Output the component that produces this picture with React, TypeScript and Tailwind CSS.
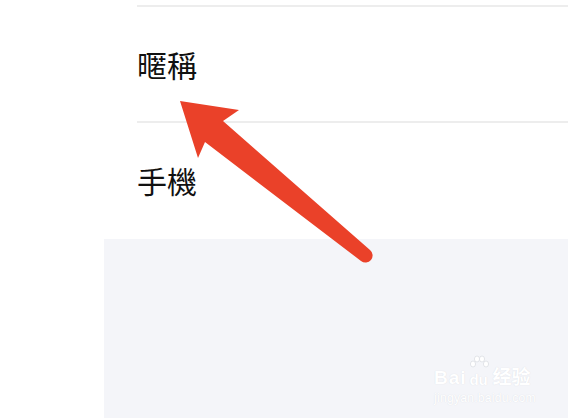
import React from "react";

export default function App() {
  return (
    <div className="relative w-[568px] h-[418px] overflow-hidden bg-white flex flex-col" style={{ fontFamily: '"Noto Sans CJK TC", "Noto Sans CJK SC", sans-serif' }}>
      <div className="pl-[137px] pt-[5px] pb-[2px]">
        <div className="h-[116px] border-t-2 border-[#ededed] flex items-center pb-[1px] text-[30px] leading-none text-[#111]">暱稱</div>
        <div className="h-[116px] border-t-2 border-[#ededed] flex items-center pb-[1px] text-[30px] leading-none text-[#111]">手機</div>
      </div>
      <div className="ml-[104px] flex-1 bg-[#f4f5f9]" />

      {/* watermark */}
      <div className="absolute left-[434px] top-[355px] flex flex-col items-start text-white [text-shadow:0_0_1px_#d6d8de]" style={{ fontFamily: '"Liberation Sans", "Noto Sans CJK SC", sans-serif' }}>
        <div className="flex items-end gap-[1px]">
          <span className="text-[19px] font-bold leading-none tracking-[1px]">Bai</span>
          <span className="relative flex flex-col items-center">
            <svg width="22" height="16" viewBox="0 0 22 16" className="mb-[1px]">
              <g fill="#fff" stroke="#dcdee3" strokeWidth="0.8">
                <ellipse cx="5" cy="9" rx="2.6" ry="3" />
                <ellipse cx="9" cy="4" rx="2.6" ry="3" />
                <ellipse cx="14" cy="4" rx="2.6" ry="3" />
                <ellipse cx="18" cy="9" rx="2.6" ry="3" />
              </g>
            </svg>
            <span className="text-[15px] font-bold leading-none">du</span>
          </span>
          <span className="text-[19px] font-bold leading-none ml-[2px]">经验</span>
        </div>
        <span className="mt-[5px] text-[12px] leading-none tracking-[0.3px]">jingyan.baidu.com</span>
      </div>

      {/* arrow */}
      <svg className="absolute left-0 top-0" width="568" height="418" viewBox="0 0 568 418">
        <path d="M180 101 L239 110 L223 121 L370 250 A7 7 0 0 1 361 261 L205 142 L198 158 Z" fill="#ea4129" />
      </svg>
    </div>
  );
}
